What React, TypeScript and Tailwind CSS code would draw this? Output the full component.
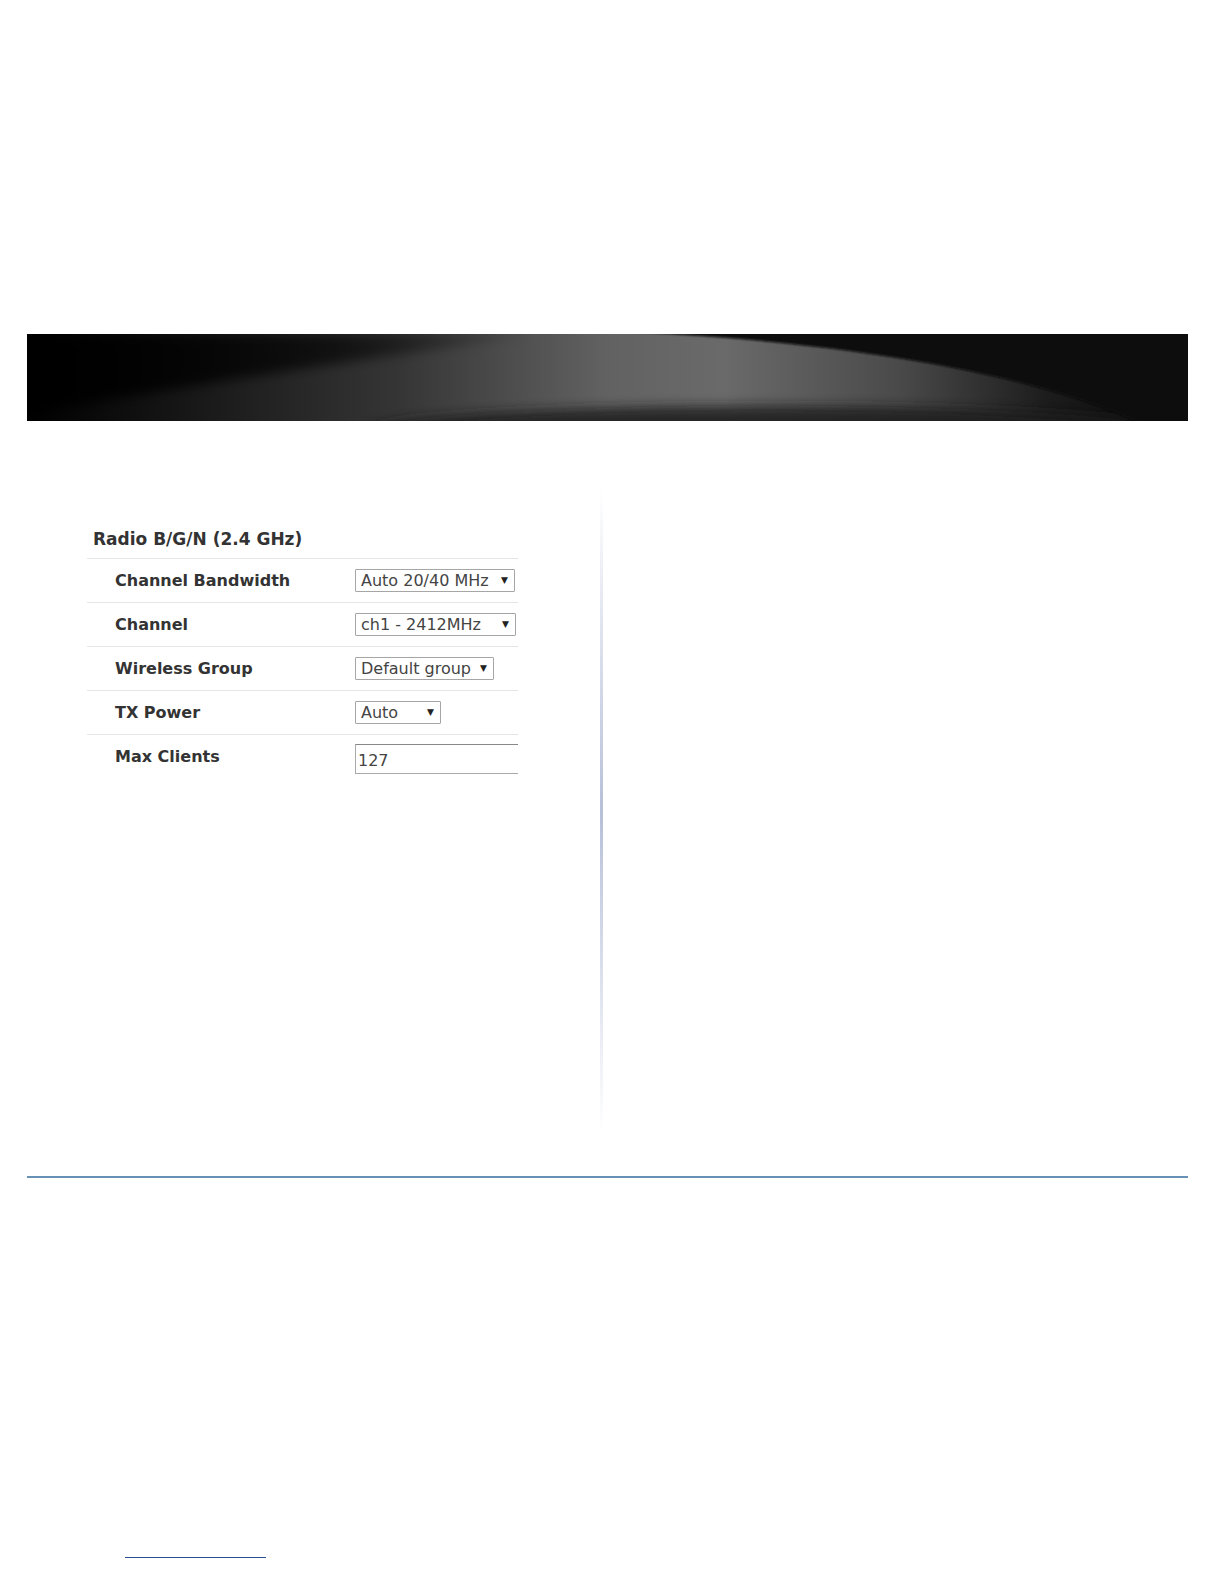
import React from 'react';

const rows = [
  { label: 'Channel Bandwidth', value: 'Auto 20/40 MHz', width: 'w-[160px]' },
  { label: 'Channel', value: 'ch1 - 2412MHz', width: 'w-[161px]' },
  { label: 'Wireless Group', value: 'Default group', width: 'w-[139px]' },
  { label: 'TX Power', value: 'Auto', width: 'w-[86px]' },
];

function Banner() {
  return (
    <svg width="1161" height="87" viewBox="0 0 1161 87" className="block overflow-hidden">
      <defs>
        <linearGradient id="base" x1="0" y1="0" x2="1" y2="0">
          <stop offset="0" stopColor="#000" />
          <stop offset="0.12" stopColor="#141414" />
          <stop offset="0.32" stopColor="#353535" />
          <stop offset="0.5" stopColor="#626262" />
          <stop offset="0.6" stopColor="#6a6a6a" />
          <stop offset="0.75" stopColor="#4a4a4a" />
          <stop offset="0.88" stopColor="#1c1c1c" />
          <stop offset="1" stopColor="#050505" />
        </linearGradient>
        <linearGradient id="topleft" x1="0" y1="0" x2="1" y2="0">
          <stop offset="0" stopColor="#000" stopOpacity="1" />
          <stop offset="0.6" stopColor="#000" stopOpacity="0.6" />
          <stop offset="1" stopColor="#000" stopOpacity="0" />
        </linearGradient>
        <filter id="soft" x="-10%" y="-50%" width="120%" height="200%">
          <feGaussianBlur stdDeviation="6" />
        </filter>
        <filter id="edge" x="-5%" y="-20%" width="110%" height="140%">
          <feGaussianBlur stdDeviation="1.2" />
        </filter>
      </defs>
      <rect width="1161" height="87" fill="url(#base)" />
      <path d="M0,0 L520,0 C380,18 200,45 0,80 Z" fill="url(#topleft)" filter="url(#soft)" />
      <ellipse cx="740" cy="98" rx="400" ry="26" fill="#1e1e1e" opacity="0.85" filter="url(#soft)" />
      <path d="M605,-2 C820,8 1010,40 1115,90 L1161,90 L1161,-2 Z" fill="#0a0a0a" filter="url(#edge)" />
    </svg>
  );
}

function SelectBox({ value, width }: { value: string; width: string }) {
  return (
    <div
      className={`${width} h-[23px] flex items-center justify-between border border-[#a6a6a6] rounded-[1px] bg-white pl-[5px] pr-[6px]`}
    >
      <span className="text-[16px] leading-none text-[#444]">{value}</span>
      <span className="text-[9px] leading-none text-[#222]">▼</span>
    </div>
  );
}

export default function App() {
  return (
    <div
      className="w-full h-[1568px] overflow-hidden bg-white flex flex-col"
      style={{ fontFamily: '"DejaVu Sans", Verdana, sans-serif' }}
    >
      <div className="h-[334px] shrink-0" />
      <div className="ml-[27px] h-[87px] shrink-0">
        <Banner />
      </div>

      <div className="flex h-[755px] shrink-0">
        <div className="ml-[87px] mt-[104px] w-[431px]">
          <div className="h-[33px] flex items-center pl-[6px] pb-[3px] text-[17px] font-bold text-[#333]">
            Radio B/G/N (2.4 GHz)
          </div>
          {rows.map((r) => (
            <div key={r.label} className="h-[44px] flex items-center border-t border-[#e6e6e6]">
              <div className="w-[268px] pl-[28px] text-[16px] font-bold text-[#333]">{r.label}</div>
              <SelectBox value={r.value} width={r.width} />
            </div>
          ))}
          <div className="flex items-start border-t border-[#e6e6e6] pt-[9px]">
            <div className="w-[268px] pl-[28px] pt-[1px] text-[16px] font-bold text-[#333]">Max Clients</div>
            <div className="flex-1 h-[30px] flex items-center border border-[#aaa] border-t-[#888] border-r-0 pl-[2px] pt-[3px] text-[16px] text-[#444]">
              127
            </div>
          </div>
        </div>
        <div className="ml-[82px] mt-[69px] w-[3px] h-[642px] bg-gradient-to-b from-white via-[#b7c0d9] to-white" />
      </div>

      <div className="ml-[27px] w-[1161px] h-[2px] shrink-0 bg-[#6891b6]" />

      <div className="h-[379px] shrink-0" />
      <div className="ml-[125px] w-[141px] h-px shrink-0 bg-[#2d4f96]" />
    </div>
  );
}
